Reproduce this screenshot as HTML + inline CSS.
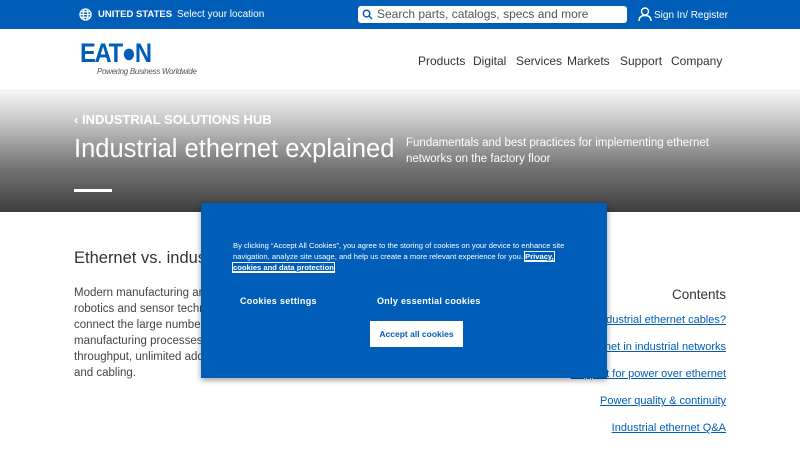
<!DOCTYPE html>
<html><head><meta charset="utf-8"><style>
*{margin:0;padding:0;box-sizing:border-box}
body{width:800px;height:450px;overflow:hidden;font-family:"Liberation Sans",sans-serif;background:#fff;position:relative;color:#333}
.top{position:absolute;left:0;top:0;width:800px;height:29px;background:#005eb8;color:#fff}
.abs{position:absolute;white-space:nowrap}
.nav span{position:absolute;top:0}
.hero{position:absolute;left:0;top:90px;width:800px;height:122px;background:linear-gradient(#f6f6f6 0%,#bdbdbd 30%,#7a7a7a 60%,#3d3d3d 100%);color:#fff;border-top:1px solid #eee}
.toc{position:absolute;right:74px;text-align:right;font-size:11px;color:#005eb8;text-decoration:underline;white-space:nowrap}
.modal{position:absolute;left:201px;top:203px;width:406px;height:175px;background:#005eb8;color:#fff;box-shadow:0 2px 6px rgba(0,0,0,.4)}
</style></head><body>
<div class="top">
<svg class="abs" style="left:79px;top:8px" width="13" height="13" viewBox="0 0 14 14" fill="none" stroke="#fff" stroke-width="1.3"><circle cx="7" cy="7" r="6"/><ellipse cx="7" cy="7" rx="2.6" ry="6"/><path d="M1 7h12M2 4h10M2 10h10"/></svg>
<div class="abs" style="left:98px;top:9px;font-size:9.5px;font-weight:bold">UNITED STATES</div>
<div class="abs" style="left:177px;top:9px;font-size:10px">Select your location</div>
<div class="abs" style="left:358px;top:6px;width:269px;height:17px;background:#fff;border-radius:3px"></div>
<svg class="abs" style="left:362px;top:9px" width="11" height="11" viewBox="0 0 12 12" fill="none" stroke="#005eb8" stroke-width="1.6"><circle cx="5" cy="5" r="3.6"/><path d="M7.6 7.6L11 11"/></svg>
<div class="abs" style="left:377px;top:7px;font-size:12px;color:#555">Search parts, catalogs, specs and more</div>
<svg class="abs" style="left:638px;top:7px" width="14" height="15" viewBox="0 0 14 15" fill="none" stroke="#fff" stroke-width="1.4"><circle cx="7" cy="4.5" r="3.5"/><path d="M1 14c0-4 2.5-5.5 6-5.5s6 1.5 6 5.5"/></svg>
<div class="abs" style="left:654px;top:10px;font-size:10px">Sign In/ Register</div>
</div>
<div class="abs" style="left:80px;top:39px;font-size:27px;font-weight:900;color:#005eb8;letter-spacing:-1.5px;line-height:28px;transform:scaleX(.88);transform-origin:left">EAT●N</div>
<div class="abs" style="left:97px;top:67px;font-size:8px;font-style:italic;color:#555;letter-spacing:-.3px">Powering Business Worldwide</div>
<div class="abs nav" style="left:0;top:54px;font-size:12px;color:#333;width:800px;height:16px">
<span style="left:418px">Products</span><span style="left:473px">Digital</span><span style="left:516px">Services</span><span style="left:567px">Markets</span><span style="left:620px">Support</span><span style="left:671px">Company</span></div>
<div class="hero">
<div class="abs" style="left:74px;top:21px;font-size:13px;font-weight:bold">‹ INDUSTRIAL SOLUTIONS HUB</div>
<div class="abs" style="left:74px;top:44px;font-size:25.5px">Industrial ethernet explained</div>
<div class="abs" style="left:406px;top:44px;font-size:11.5px;line-height:16px">Fundamentals and best practices for implementing ethernet<br>networks on the factory floor</div>
<div class="abs" style="left:74px;top:98px;width:38px;height:3px;background:#fff"></div>
</div>
<div class="abs" style="left:74px;top:249px;font-size:16.5px;color:#333">Ethernet vs. industrial ethernet</div>
<div class="abs" style="left:74px;top:285px;font-size:11.5px;line-height:16px;color:#444">Modern manufacturing and industrial automation<br>robotics and sensor technologies require networks<br>connect the large number of devices used in<br>manufacturing processes, ethernet offers high<br>throughput, unlimited addresses, and simplified<br>and cabling.</div>
<div class="abs" style="right:74px;top:287px;font-size:13.5px;color:#333">Contents</div>
<div class="toc" style="top:314px">What are industrial ethernet cables?</div>
<div class="toc" style="top:341px">Ethernet in industrial networks</div>
<div class="toc" style="top:368px">Support for power over ethernet</div>
<div class="toc" style="top:395px">Power quality &amp; continuity</div>
<div class="toc" style="top:422px">Industrial ethernet Q&amp;A</div>
<div class="modal">
<div class="abs" style="left:32px;top:37px;font-size:7.6px;line-height:11px;white-space:normal;width:345px">By clicking “Accept All Cookies”, you agree to the storing of cookies on your device to enhance site navigation, analyze site usage, and help us create a more relevant experience for you. <b style="text-decoration:underline;outline:1px solid #fff">Privacy, cookies and data protection</b></div>
<div class="abs" style="left:39px;top:93px;font-size:9px;font-weight:bold;letter-spacing:.3px">Cookies settings</div>
<div class="abs" style="left:176px;top:93px;font-size:9px;font-weight:bold;letter-spacing:.3px">Only essential cookies</div>
<div class="abs" style="left:169px;top:118px;width:93px;height:26px;background:#fff;color:#005eb8;font-size:8.5px;font-weight:bold;text-align:center;line-height:26px">Accept all cookies</div>
</div>
</body></html>
